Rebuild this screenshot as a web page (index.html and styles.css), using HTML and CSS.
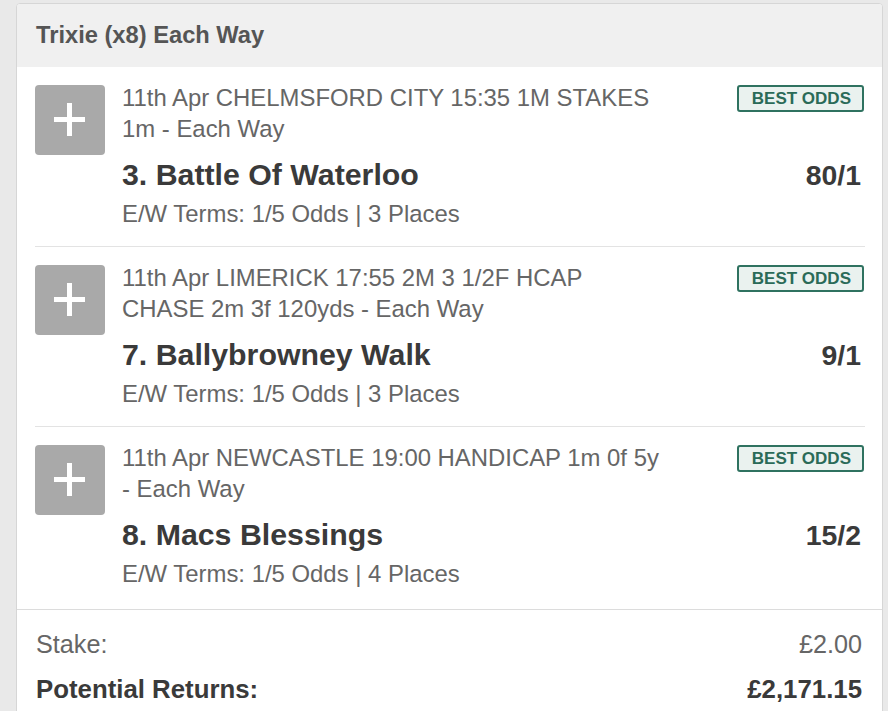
FILE: index.html
```html
<!DOCTYPE html>
<html>
<head>
<meta charset="utf-8">
<link rel="stylesheet" href="styles.css">
</head>
<body>
<div class="card">
  <div class="card-header">Trixie (x8) Each Way</div>
  <div class="selections">
    <div class="selection">
      <div class="add-btn"><svg width="70" height="70" viewBox="0 0 70 70"><rect x="19" y="32" width="31" height="5" fill="#fff"/><rect x="32" y="18" width="5" height="33" fill="#fff"/></svg></div>
      <div class="sel-main">
        <div class="sel-top">
          <div class="meta">11th Apr CHELMSFORD CITY 15:35 1M STAKES 1m - Each Way</div>
          <div class="badge">BEST ODDS</div>
        </div>
        <div class="sel-name-row"><span class="name">3. Battle Of Waterloo</span><span class="odds">80/1</span></div>
        <div class="terms">E/W Terms: 1/5 Odds | 3 Places</div>
      </div>
    </div>
    <div class="selection">
      <div class="add-btn"><svg width="70" height="70" viewBox="0 0 70 70"><rect x="19" y="32" width="31" height="5" fill="#fff"/><rect x="32" y="18" width="5" height="33" fill="#fff"/></svg></div>
      <div class="sel-main">
        <div class="sel-top">
          <div class="meta">11th Apr LIMERICK 17:55 2M 3 1/2F HCAP CHASE 2m 3f 120yds - Each Way</div>
          <div class="badge">BEST ODDS</div>
        </div>
        <div class="sel-name-row"><span class="name">7. Ballybrowney Walk</span><span class="odds">9/1</span></div>
        <div class="terms">E/W Terms: 1/5 Odds | 3 Places</div>
      </div>
    </div>
    <div class="selection">
      <div class="add-btn"><svg width="70" height="70" viewBox="0 0 70 70"><rect x="19" y="32" width="31" height="5" fill="#fff"/><rect x="32" y="18" width="5" height="33" fill="#fff"/></svg></div>
      <div class="sel-main">
        <div class="sel-top">
          <div class="meta">11th Apr NEWCASTLE 19:00 HANDICAP 1m 0f 5y - Each Way</div>
          <div class="badge">BEST ODDS</div>
        </div>
        <div class="sel-name-row"><span class="name">8. Macs Blessings</span><span class="odds">15/2</span></div>
        <div class="terms">E/W Terms: 1/5 Odds | 4 Places</div>
      </div>
    </div>
  </div>
  <div class="summary">
    <div class="summary-row"><span>Stake:</span><span>£2.00</span></div>
    <div class="summary-row strong"><span>Potential Returns:</span><span>£2,171.15</span></div>
  </div>
</div>
</body>
</html>
```
FILE: styles.css
```css
html, body {
  margin: 0;
  padding: 0;
  background: #e9e9e9;
  font-family: "Liberation Sans", Arial, sans-serif;
}
body {
  padding: 3px 5px 0 16px;
  height: 711px;
  box-sizing: border-box;
  overflow: hidden;
}
.card {
  background: #fff;
  border: 1px solid #d6d6d6;
  border-radius: 4px 4px 0 0;
  overflow: hidden;
  height: 720px;
}
.card-header {
  background: #f0f0f0;
  height: 63px;
  line-height: 62px;
  padding-left: 19px;
  font-size: 23.7px;
  font-weight: bold;
  color: #555;
}
.selections {
  padding: 0 17px 0 18px;
}
.selection {
  display: flex;
  padding: 15px 0 17px;
  border-bottom: 1px solid #e3e3e3;
}
.selection:last-child {
  border-bottom: none;
  padding-bottom: 20px;
}
.add-btn {
  width: 70px;
  height: 70px;
  margin-top: 3px;
  background: #a9a9a9;
  border-radius: 4px;
  flex: none;
}
.add-btn svg {
  display: block;
}
.sel-main {
  flex: 1;
  margin-left: 17px;
  margin-right: 1px;
}
.sel-top {
  display: flex;
  align-items: flex-start;
}
.meta {
  flex: none;
  width: 541px;
  font-size: 23.9px;
  line-height: 31px;
  color: #666;
}
.badge {
  margin-left: auto;
  margin-top: 3px;
  border: 2px solid #2f7260;
  border-radius: 3px;
  background: #eaf2ef;
  color: #2a6b58;
  font-size: 17px;
  font-weight: bold;
  line-height: 23px;
  padding: 0 11px 0 13px;
}
.sel-name-row {
  display: flex;
  justify-content: space-between;
  align-items: baseline;
  margin-top: 11px;
  line-height: 40px;
  color: #3a3a3a;
  font-weight: bold;
}
.name {
  font-size: 30.3px;
}
.odds {
  font-size: 28.4px;
  margin-right: 3px;
}
.terms {
  margin-top: 3px;
  font-size: 23.9px;
  line-height: 31px;
  color: #666;
}
.summary {
  border-top: 1px solid #dcdcdc;
  padding: 12px 20px 0 19px;
}
.summary-row {
  display: flex;
  justify-content: space-between;
  font-size: 25.2px;
  line-height: 45px;
  color: #666;
}
.summary-row.strong {
  font-size: 25.8px;
  line-height: 44px;
  font-weight: bold;
  color: #3a3a3a;
}
```
